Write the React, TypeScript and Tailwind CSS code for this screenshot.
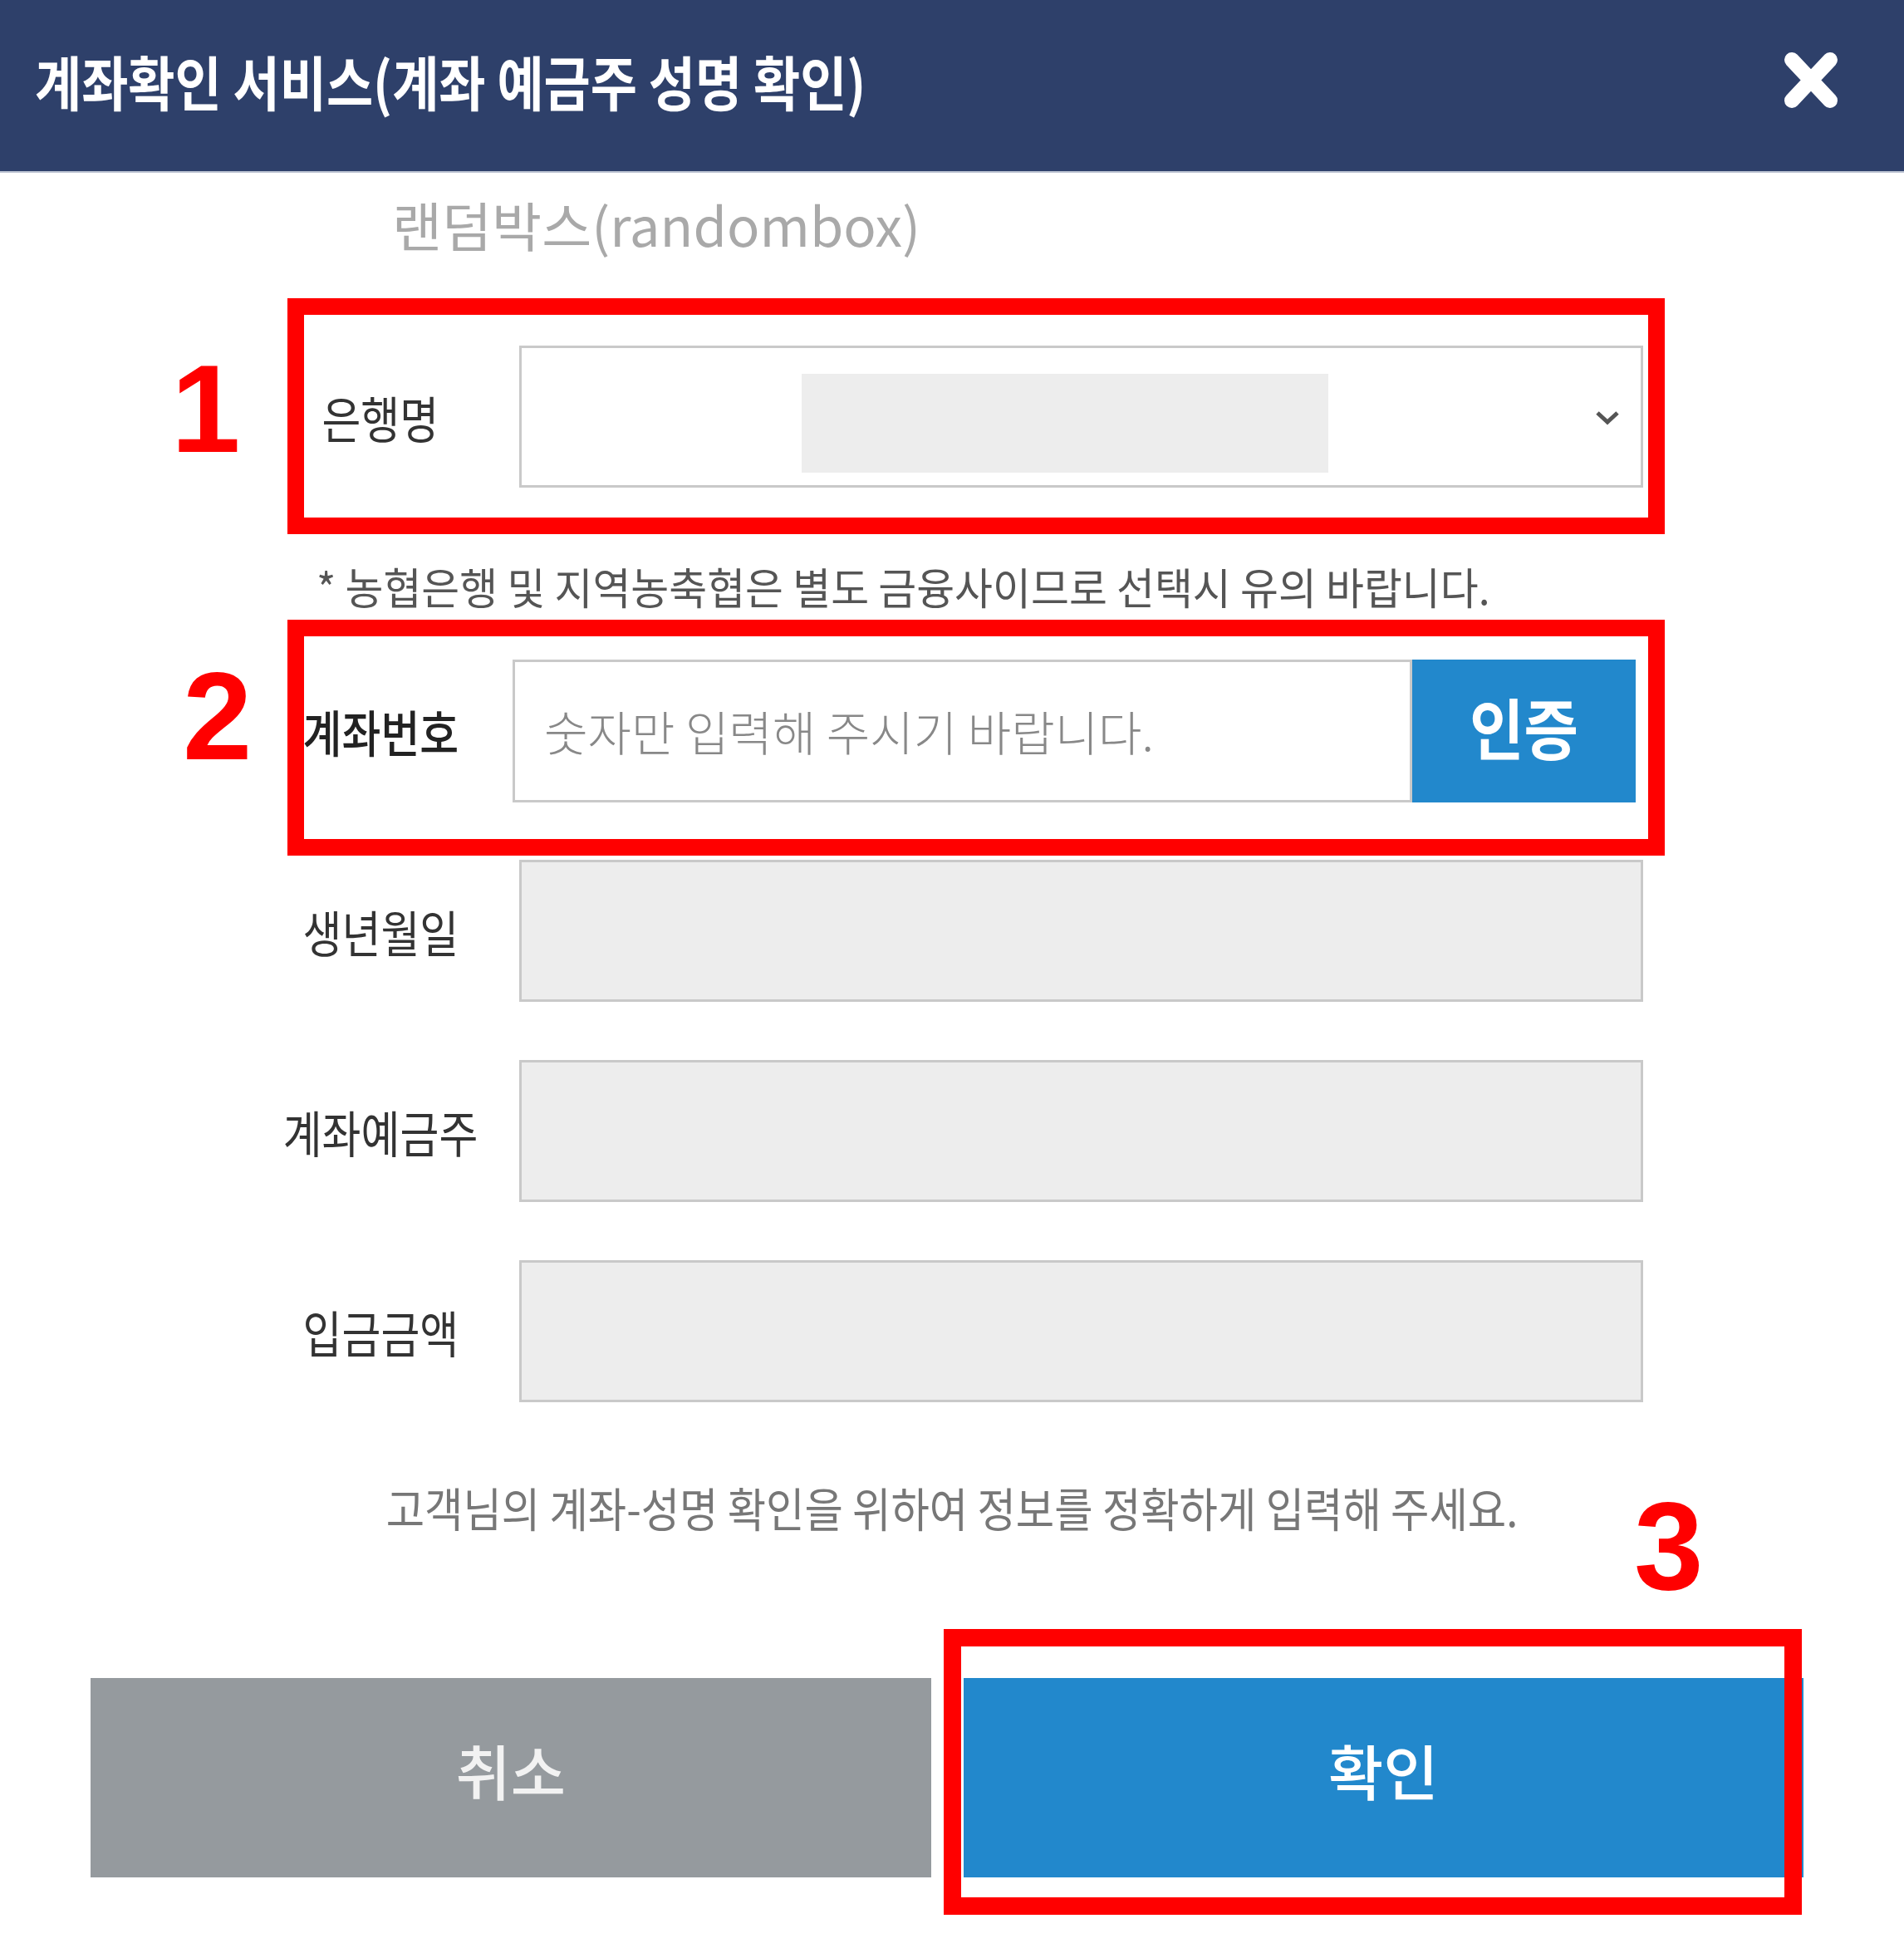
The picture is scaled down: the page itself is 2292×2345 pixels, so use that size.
const KR = "font-['Noto_Sans_CJK_KR','Noto_Sans',sans-serif]";

function Label({ text, bold }: { text: string; bold?: boolean }) {
  return (
    <div className="w-[260px] shrink-0 flex justify-center">
      <span className={`inline-block text-[60px] leading-none scale-x-[0.85] whitespace-nowrap ${bold ? "font-medium text-[#222222]" : "font-normal text-[#333333]"}`}>{text}</span>
    </div>
  );
}

function ReadonlyRow({ label }: { label: string }) {
  return (
    <div className="flex items-center">
      <Label text={label} />
      <div className="ml-[37px] w-[1353px] h-[171px] bg-[#ededed] border-[3px] border-[#c9c9c9]" />
    </div>
  );
}

export default function App() {
  return (
    <div className={`relative w-[2292px] h-[2345px] bg-white overflow-hidden ${KR}`}>
      <header className="h-[206px] bg-[#2e406a] flex items-center justify-between pl-[42px] pr-[79px] pb-[14px]">
        <h1 className="inline-block origin-left scale-x-[0.86] text-[71px] leading-[80px] font-bold text-white whitespace-nowrap">계좌확인 서비스(계좌 예금주 성명 확인)</h1>
        <svg width="66" height="69" viewBox="0 0 66 69" className="shrink-0">
          <path d="M10 10 L56 59 M56 10 L10 59" stroke="white" strokeWidth="18" strokeLinecap="round" />
        </svg>
      </header>
      <div className="h-[2px] bg-[#bcc3d2]" />

      <div className="pl-[472px] pt-[25px]">
        <span className="inline-block origin-left scale-x-[1.02] text-[64px] leading-[72px] text-[#a9a9a9] whitespace-nowrap">랜덤박스(randombox)</span>
      </div>

      <div className="pl-[328px] mt-[111px] flex flex-col">
        <div className="flex items-center">
          <Label text="은행명" />
          <div className="ml-[37px] w-[1353px] h-[171px] border-[3px] border-[#c9c9c9] bg-white flex items-center pl-[337px] pr-[20px]">
            <div className="mt-[16px] w-[634px] h-[119px] bg-[#ededed]" />
            <svg width="40" height="26" viewBox="0 0 40 26" className="ml-auto">
              <path d="M8 8 L20 19 L32 8" fill="none" stroke="#555" strokeWidth="5" />
            </svg>
          </div>
        </div>

        <p className="mt-[89px] ml-[53px] inline-block origin-left scale-x-[0.96] text-[52px] leading-[60px] text-[#555555] whitespace-nowrap">* 농협은행 및 지역농축협은 별도 금융사이므로 선택시 유의 바랍니다.</p>

        <div className="mt-[58px] flex items-center">
          <Label text="계좌번호" bold />
          <div className="ml-[29px] w-[1352px] h-[172px] flex">
            <div className="flex-1 border-[3px] border-[#c9c9c9] bg-white flex items-center pl-[35px]">
              <span className="inline-block text-[57px] font-light text-[#888888] whitespace-nowrap">숫자만 입력해 주시기 바랍니다.</span>
            </div>
            <button className="w-[269px] bg-[#2288cc] flex items-center justify-center pb-[14px]">
              <span className="inline-block scale-x-[0.89] text-[80px] leading-none font-bold text-white">인증</span>
            </button>
          </div>
        </div>

        <div className="mt-[69px] flex flex-col gap-[70px]">
          <ReadonlyRow label="생년월일" />
          <ReadonlyRow label="계좌예금주" />
          <ReadonlyRow label="입금금액" />
        </div>
      </div>

      <div className="mt-[94px] flex justify-center">
        <p className="inline-block scale-x-[0.9] text-[56px] leading-[64px] text-[#777777] whitespace-nowrap">고객님의 계좌-성명 확인을 위하여 정보를 정확하게 입력해 주세요.</p>
      </div>

      <div className="mt-[174px] pl-[109px] pr-[121px] flex gap-[39px]">
        <button className="flex-1 h-[240px] bg-[#959a9e] flex items-center justify-center pb-[20px]">
          <span className="inline-block text-[72px] leading-none font-medium text-[#f2f2f2]">취소</span>
        </button>
        <button className="flex-1 h-[240px] bg-[#2288cc] flex items-center justify-center pb-[20px]">
          <span className="inline-block text-[72px] leading-none font-medium text-white">확인</span>
        </button>
      </div>

      {/* annotation overlays */}
      <div className="absolute left-[346px] top-[359px] w-[1658px] h-[284px] border-[20px] border-[#ff0000]" />
      <div className="absolute left-[346px] top-[746px] w-[1658px] h-[284px] border-[20px] border-[#ff0000]" />
      <div className="absolute left-[1136px] top-[1961px] w-[1033px] h-[344px] border-[21px] border-[#ff0000]" />
      <span className="absolute left-[206px] top-[417px] font-['Liberation_Sans',Arial,sans-serif] font-bold text-[150px] leading-[150px] text-[#ff0000]">1</span>
      <span className="absolute left-[220px] top-[787px] font-['Liberation_Sans',Arial,sans-serif] font-bold text-[150px] leading-[150px] text-[#ff0000]">2</span>
      <span className="absolute left-[1967px] top-[1786px] font-['Liberation_Sans',Arial,sans-serif] font-bold text-[150px] leading-[150px] text-[#ff0000]">3</span>
    </div>
  );
}
